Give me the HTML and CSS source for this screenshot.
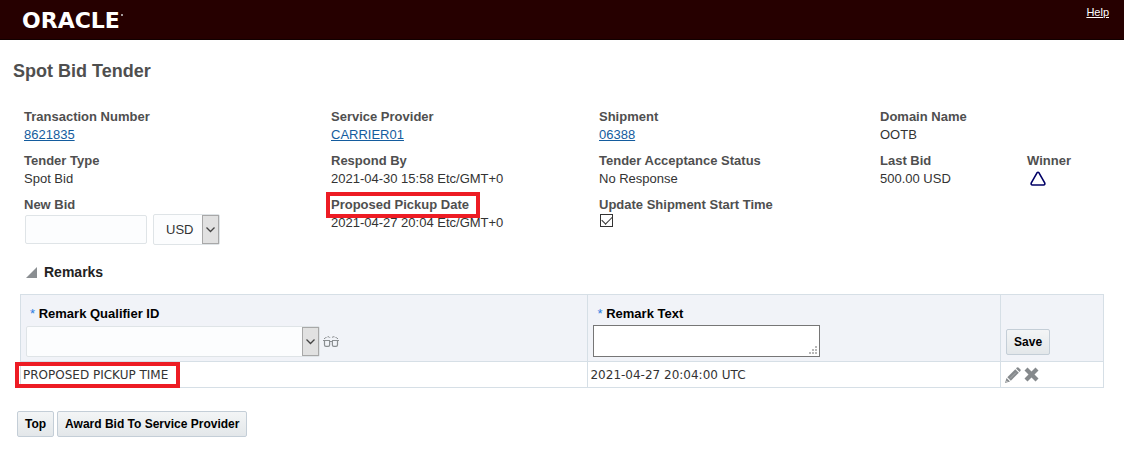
FILE: index.html
```html
<!DOCTYPE html>
<html lang="en">
<head>
    <meta charset="UTF-8">
    <meta name="viewport" content="width=device-width, initial-scale=1.0">
    <title>Spot Bid Tender</title>
    <link rel="stylesheet" href="styles.css">
</head>
<body>
    <header class="topbar">
        <div class="logo">ORACLE<span class="logo-mark"></span></div>
        <a class="help" href="#help">Help</a>
    </header>

    <main>
        <h1>Spot Bid Tender</h1>

        <div class="fields">
            <div class="field">
                <span class="label">Transaction Number</span>
                <a href="#transaction">8621835</a>
            </div>
            <div class="field">
                <span class="label">Service Provider</span>
                <a href="#provider">CARRIER01</a>
            </div>
            <div class="field">
                <span class="label">Shipment</span>
                <a href="#shipment">06388</a>
            </div>
            <div class="field wide">
                <span class="label">Domain Name</span>
                <span>OOTB</span>
            </div>

            <div class="field">
                <span class="label">Tender Type</span>
                <span>Spot Bid</span>
            </div>
            <div class="field">
                <span class="label">Respond By</span>
                <span>2021-04-30 15:58 Etc/GMT+0</span>
            </div>
            <div class="field">
                <span class="label">Tender Acceptance Status</span>
                <span>No Response</span>
            </div>
            <div class="field">
                <span class="label">Last Bid</span>
                <span>500.00 USD</span>
            </div>
            <div class="field">
                <span class="label">Winner</span>
                <svg class="winner" width="22" height="18" viewBox="0 0 22 18">
                    <path d="M10 2.800Q11 1.600 12 2.800L17.700 12.800Q18.400 15 16.500 15H5.500Q3.600 15 4.300 12.800Z" fill="none" stroke="#000066" stroke-width="1.600" stroke-linejoin="round"/>
                </svg>
            </div>

            <div class="field">
                <label class="label" for="newbid">New Bid</label>
                <div class="bid">
                    <input type="text" id="newbid" class="box">
                    <div class="dropdown currency">
                        <select class="box" aria-label="Currency">
                            <option>USD</option>
                        </select>
                        <span class="arrow"><svg width="9" height="6" viewBox="0 0 9 6"><path d="M0.500 0.500L4.500 4.500L8.500 0.500" fill="none" stroke="#444" stroke-width="1.300"/></svg></span>
                    </div>
                </div>
            </div>
            <div class="field">
                <span class="label"><span class="marked">Proposed Pickup Date</span></span>
                <span>2021-04-27 20:04 Etc/GMT+0</span>
            </div>
            <div class="field">
                <label class="label" for="updatestart">Update Shipment Start Time</label>
                <input type="checkbox" id="updatestart" class="check" checked>
            </div>
        </div>

        <h2>
            <svg width="11" height="11" viewBox="0 0 11 11"><path d="M11 0V11H0Z" fill="#8a8e91"/></svg>
            Remarks
        </h2>

        <table>
            <colgroup>
                <col class="col-id">
                <col class="col-text">
                <col class="col-actions">
            </colgroup>
            <thead>
                <tr>
                    <th>
                        <label for="qualifier"><span class="star">*</span> Remark Qualifier ID</label>
                        <div class="lookup">
                            <div class="dropdown qualifier">
                                <select class="box" id="qualifier">
                                    <option></option>
                                </select>
                                <span class="arrow"><svg width="9" height="6" viewBox="0 0 9 6"><path d="M0.500 0.500L4.500 4.500L8.500 0.500" fill="none" stroke="#444" stroke-width="1.300"/></svg></span>
                            </div>
                            <button class="icon" aria-label="Find">
                                <svg width="16" height="11" viewBox="0 0 16 11" fill="none" stroke="#8a8e91">
                                    <path d="M0 4.500H7M9 4.500H16M7 5.500H9" stroke-width="1.200"/>
                                    <path d="M1.500 5V9Q1.500 10.400 3 10.400H5.200Q6.600 10.400 6.600 9V5M9.400 5V9Q9.400 10.400 10.800 10.400H13Q14.500 10.400 14.500 9V5" stroke-width="1.200"/>
                                    <path d="M1 3Q2 1.500 3.500 1.500M4.500 0.800H6L7 1.800M9 1.500L10 0.800H11.500M12.500 1.500Q14 1.500 15 3"/>
                                </svg>
                            </button>
                        </div>
                    </th>
                    <th>
                        <label for="remark"><span class="star">*</span> Remark Text</label>
                        <div class="remark">
                            <textarea id="remark"></textarea>
                            <svg class="grip" width="8" height="8" viewBox="0 0 8 8"><path d="M6 0h2v2h-2zM3 3h2v2h-2zM6 3h2v2h-2zM0 6h2v2h-2zM3 6h2v2h-2zM6 6h2v2h-2z" fill="#b8b8b8"/></svg>
                        </div>
                    </th>
                    <th class="save">
                        <button class="btn">Save</button>
                    </th>
                </tr>
            </thead>
            <tbody>
                <tr>
                    <td><span class="marked marked-cell">PROPOSED PICKUP TIME</span></td>
                    <td>2021-04-27 20:04:00 UTC</td>
                    <td>
                        <div class="actions">
                            <button class="icon" aria-label="Edit">
                                <svg width="16" height="16" viewBox="0 0 16 16" fill="#85898c">
                                    <path d="M0 16L1.500 11L5 14.500Z"/>
                                    <path d="M2.300 10.200L10.300 2.200L13.800 5.700L5.800 13.700Z"/>
                                    <path d="M11 1.500L12.200 0.400Q12.800 0 13.400 0.500L15.500 2.600Q16 3.200 15.600 3.800L14.500 5Z"/>
                                    <path d="M5 11.500L11 5.500" stroke="#a9acae" fill="none"/>
                                    <path d="M1.200 13.800L2.200 14.800" stroke="#fff" fill="none"/>
                                </svg>
                            </button>
                            <button class="icon" aria-label="Delete">
                                <svg width="15" height="15" viewBox="0 0 15 15" fill="#85898c">
                                    <path d="M3.500 0.500L7.500 4.500L11.500 0.500L14.500 3.500L10.500 7.500L14.500 11.500L11.500 14.500L7.500 10.500L3.500 14.500L0.500 11.500L4.500 7.500L0.500 3.500Z"/>
                                </svg>
                            </button>
                        </div>
                    </td>
                </tr>
            </tbody>
        </table>

        <div class="buttons">
            <button class="btn">Top</button>
            <button class="btn">Award Bid To Service Provider</button>
        </div>
    </main>
</body>
</html>
```
FILE: styles.css
```css
*{
    box-sizing: border-box;
}

body{
    margin: 0;
    background-color: white;
    font-family: "Liberation Sans", Arial, sans-serif;
    font-size: 13px;
    line-height: 18px;
    color: #333;
}

.topbar{
    display: flex;
    justify-content: space-between;
    align-items: flex-start;
    height: 40px;
    padding: 4px 15px 0 22px;
    background-color: #260000;
    border-bottom: 1px solid #120000;
}

.logo{
    display: flex;
    align-items: flex-start;
    font-family: "DejaVu Sans", sans-serif;
    font-size: 22px;
    font-weight: bold;
    line-height: 34px;
    color: white;
}

.logo-mark{
    width: 2px;
    height: 2px;
    margin: 10px 0 0 1px;
    border-radius: 1px;
    background-color: #ccc;
}

.help{
    font-size: 11px;
    line-height: 16px;
    color: white;
}

main{
    padding: 20px 20px 0;
}

h1{
    margin: 0 0 26px -7px;
    font-size: 18px;
    line-height: 22px;
    color: #4f4f4f;
}

a{
    color: #145c9e;
}

.fields{
    display: grid;
    grid-template-columns: 307fr 268fr 281fr 147fr 77fr;
    row-gap: 8px;
    padding-left: 4px;
}

.field{
    display: flex;
    flex-direction: column;
    align-items: flex-start;
    white-space: nowrap;
}

.wide{
    grid-column: span 2;
}

.label{
    font-weight: bold;
    color: #4f4f4f;
}

.bid{
    display: flex;
    align-items: center;
    gap: 6px;
    padding: 0 1px;
}

.box{
    display: block;
    border: 1px solid #dfe4e7;
    border-radius: 2px;
    background-color: #fcfdfe;
    font-family: inherit;
    font-size: 13px;
    color: #333;
}

#newbid{
    width: 122px;
    height: 29px;
}

.dropdown{
    position: relative;
}

.dropdown select{
    width: 100%;
    height: 31px;
    padding: 0 20px 0 12px;
    appearance: none;
}

.currency{
    width: 67px;
}

.arrow{
    position: absolute;
    top: 1px;
    right: 1px;
    bottom: 1px;
    width: 17px;
    display: flex;
    align-items: center;
    justify-content: center;
    border: 1px solid #a8a8a8;
    background-color: #e1e1e1;
    pointer-events: none;
}

.check{
    display: grid;
    place-items: center;
    width: 13px;
    height: 13px;
    margin: 0 1px;
    border: 1px solid #333;
    background-color: white;
    appearance: none;
}

.check:checked::before{
    content: "";
    width: 9px;
    height: 5px;
    margin-bottom: 4px;
    border: solid #333;
    border-width: 0 0 1px 1px;
    transform: rotate(-45deg);
}

/* red callout drawn round a text */
.marked{
    position: relative;
}

.marked::after{
    content: "";
    position: absolute;
    inset: -5px -11px -6px -5px;
    border: 4px solid #ed1c24;
}

.marked-cell::after{
    inset: -6px -12px -6px -8px;
}

h2{
    display: flex;
    align-items: center;
    gap: 7px;
    margin: 18px 0 13px 6px;
    font-size: 14px;
    line-height: 18px;
    color: #222;
}

table{
    width: 100%;
    table-layout: fixed;
    border-collapse: collapse;
}

.col-id{
    width: 52.4%;
}

.col-text{
    width: 38.1%;
}

th, td{
    border: 1px solid #d6dfe6;
}

th{
    padding: 10px 5px 3px;
    background-color: #f1f3f8;
    text-align: left;
    vertical-align: top;
    color: #000;
}

th label{
    display: block;
    padding: 0 4px;
}

.star{
    font-weight: normal;
    color: #2a7de1;
}

.lookup{
    display: flex;
    align-items: center;
    gap: 3px;
    margin: 3px 0 1px;
}

.qualifier{
    width: 294px;
}

.remark{
    position: relative;
    width: 227px;
    margin-top: 2px;
}

textarea{
    display: block;
    width: 100%;
    height: 32px;
    border: 1px solid #767676;
    resize: none;
}

.grip{
    position: absolute;
    right: 3px;
    bottom: 3px;
}

.save{
    vertical-align: bottom;
    padding-bottom: 6px;
}

td{
    height: 26px;
    padding: 0 2px;
    font-family: "DejaVu Sans", sans-serif;
    font-size: 12px;
}

.actions{
    display: flex;
    align-items: center;
    gap: 3px;
    padding-left: 2px;
}

.icon{
    display: flex;
    padding: 0;
    border: none;
    background: none;
}

.btn{
    height: 26px;
    padding: 0 7px;
    border: 1px solid #c4ced7;
    border-radius: 2px;
    background: linear-gradient(#f3f5f6, #e3e7ea);
    font-family: inherit;
    font-size: 12px;
    font-weight: bold;
    color: #000;
}

.buttons{
    display: flex;
    gap: 3px;
    margin: 23px 0 0 -3px;
}
```
